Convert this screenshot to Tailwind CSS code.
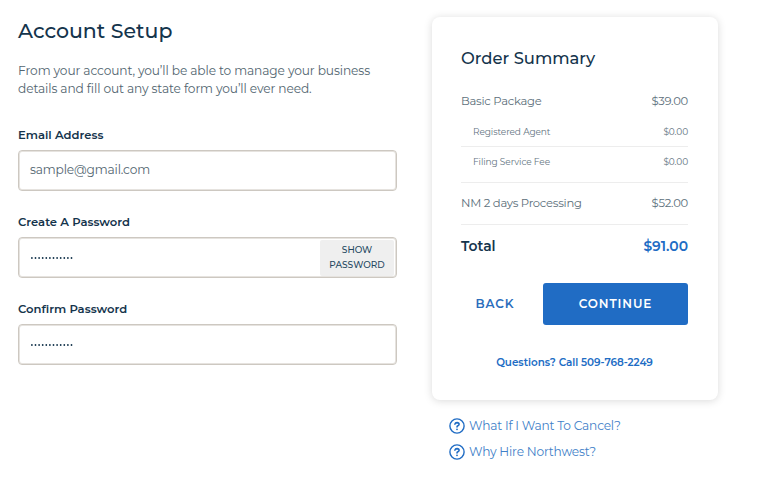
<!DOCTYPE html>
<html lang="en">
<head>
<meta charset="utf-8">
<title>Account Setup</title>
<script src="https://cdn.jsdelivr.net/npm/@tailwindcss/browser@4"></script>
</head>
<body class="bg-white w-[768px] h-[485px] overflow-hidden font-['Montserrat','Inter',sans-serif] text-[#5a6b75]">
<main class="flex items-start pl-[18px]">
  <form class="w-[379px] pt-[17px] shrink-0">
    <h1 class="h-[28px] leading-[28px] text-[20.5px] font-medium text-[#14344c] whitespace-nowrap">Account Setup</h1>
    <p class="mt-[17px] leading-[18px] text-[12.2px] tracking-[-0.11px] text-[#526570] whitespace-nowrap">From your account, you’ll be able to manage your business<br>details and fill out any state form you’ll ever need.</p>
    <label class="block mt-[28px] h-[18px] leading-[18px] text-[11.6px] font-semibold text-[#14344c]">Email Address</label>
    <div class="mt-[6px] h-[41px] rounded border border-[#cdc8c1] shadow-[inset_0_0_0_1px_#e6e3df] pl-[11px] flex items-center text-[12.2px] tracking-[-0.15px] text-[#526570]">sample@gmail.com</div>
    <label class="block mt-[22px] h-[18px] leading-[18px] text-[11.6px] font-semibold text-[#14344c]">Create A Password</label>
    <div class="mt-[6px] h-[41px] rounded border border-[#cdc8c1] shadow-[inset_0_0_0_1px_#e6e3df] pl-[12px] pr-[2px] flex items-center justify-between">
      <svg class="w-[43px] h-[2px]" viewBox="0 0 43 2"><path d="M.9 1H43" fill="none" stroke="#14344c" stroke-width="1.8" stroke-linecap="round" stroke-dasharray="0 3.6"/></svg>
      <button type="button" class="w-[74px] h-[36px] pb-[2px] rounded-xs bg-[#efefef] leading-[15px] text-[9px] font-medium text-[#24485f]">SHOW<br>PASSWORD</button>
    </div>
    <label class="block mt-[22px] h-[18px] leading-[18px] text-[11.6px] font-semibold text-[#14344c]">Confirm Password</label>
    <div class="mt-[6px] h-[41px] rounded border border-[#cdc8c1] shadow-[inset_0_0_0_1px_#e6e3df] pl-[12px] flex items-center">
      <svg class="w-[43px] h-[2px]" viewBox="0 0 43 2"><path d="M.9 1H43" fill="none" stroke="#14344c" stroke-width="1.8" stroke-linecap="round" stroke-dasharray="0 3.6"/></svg>
    </div>
  </form>
  <aside class="ml-[35px] mt-[17px] w-[286px] shrink-0 whitespace-nowrap">
    <section class="h-[383px] rounded-lg bg-white shadow-[0_1px_8px_rgba(0,0,0,0.15)] pl-[29px] pr-[30px] pt-[29px]">
      <h2 class="h-[24px] leading-[24px] text-[16.4px] font-medium text-[#14344c]">Order Summary</h2>
      <div class="mt-[22px] h-[20px] flex items-center justify-between text-[11.6px] tracking-[-0.27px] text-[#5d6f7b]"><span>Basic Package</span><span>$39.00</span></div>
      <div class="h-[35px] pt-[5px] pl-[12px] border-b border-[#ededed] flex items-center justify-between text-[9px] tracking-[-0.1px] text-[#64747f]"><span>Registered Agent</span><span>$0.00</span></div>
      <div class="h-[36px] pb-[6px] pl-[12px] border-b border-[#ededed] flex items-center justify-between text-[9px] tracking-[-0.1px] text-[#64747f]"><span>Filing Service Fee</span><span>$0.00</span></div>
      <div class="h-[42px] border-b border-[#ededed] flex items-center justify-between text-[11.6px] tracking-[-0.27px] text-[#5d6f7b]"><span>NM 2 days Processing</span><span>$52.00</span></div>
      <div class="h-[43px] flex items-center justify-between text-[13.9px] font-semibold text-[#14344c]"><span>Total</span><span class="text-[#206cc4]">$91.00</span></div>
      <div class="mt-[15px] h-[42px] flex justify-between text-[12px] font-semibold">
        <button type="button" class="w-[68px] text-center text-[#2a6dbc]"><span class="tracking-[0.9px]">BACK</span></button>
        <button type="button" class="w-[145px] rounded-[3px] bg-[#206cc4] text-white"><span class="tracking-[0.9px]">CONTINUE</span></button>
      </div>
      <p class="mt-[29px] h-[18px] leading-[18px] text-center text-[10.4px] tracking-[-0.04px] font-semibold text-[#206cc4]">Questions? Call 509-768-2249</p>
    </section>
    <nav class="mt-[18px] pl-[17px] text-[12.2px] tracking-[-0.2px] text-[#3f7fc8] flex flex-col gap-[10px]">
      <a class="flex items-center gap-1 h-4"><svg class="w-4 h-4" viewBox="0 0 16 16" fill="none" stroke="#206cc4" stroke-linecap="round" stroke-linejoin="round"><circle cx="8" cy="8" r="7.1" stroke-width="1.4"/><path d="M5.9 6.1Q6.3 4.6 8 4.6Q10.1 4.7 10.1 6.3Q10.1 7.3 8.9 7.8Q8 8.2 8 9" stroke-width="1.6"/><path d="M8 11.3V11.35" stroke-width="1.8"/></svg><span>What If I Want To Cancel?</span></a>
      <a class="flex items-center gap-1 h-4"><svg class="w-4 h-4" viewBox="0 0 16 16" fill="none" stroke="#206cc4" stroke-linecap="round" stroke-linejoin="round"><circle cx="8" cy="8" r="7.1" stroke-width="1.4"/><path d="M5.9 6.1Q6.3 4.6 8 4.6Q10.1 4.7 10.1 6.3Q10.1 7.3 8.9 7.8Q8 8.2 8 9" stroke-width="1.6"/><path d="M8 11.3V11.35" stroke-width="1.8"/></svg><span>Why Hire Northwest?</span></a>
    </nav>
  </aside>
</main>
</body>
</html>
